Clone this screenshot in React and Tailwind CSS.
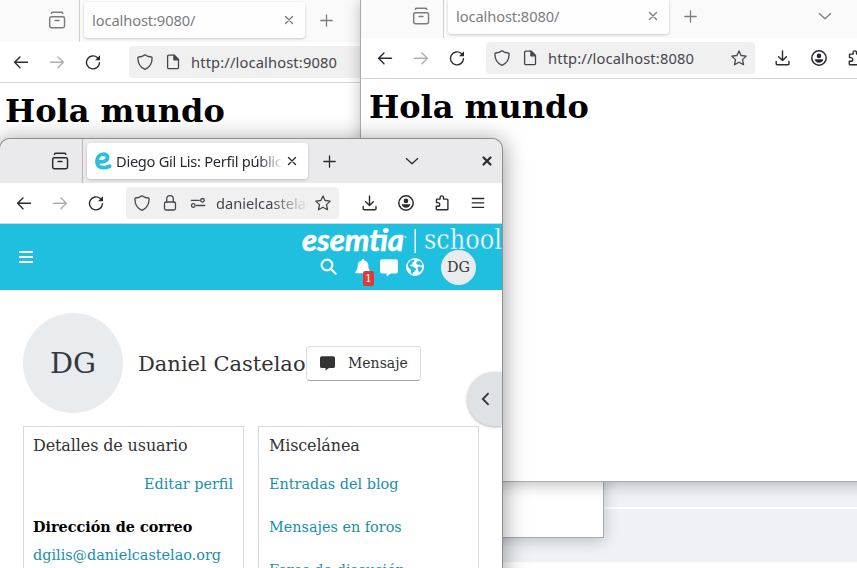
import React from "react";

const UI = "font-['Noto_Sans','Open_Sans',sans-serif]";
const SERIF = "font-['DejaVu_Serif',serif]";

function Icon({ children, className = "", size = 16 }) {
  return (
    <svg
      width={size}
      height={size}
      viewBox="0 0 16 16"
      fill="none"
      stroke="currentColor"
      strokeWidth="1.3"
      strokeLinecap="round"
      strokeLinejoin="round"
      className={"shrink-0 " + className}
    >
      {children}
    </svg>
  );
}

const Back = () => (
  <Icon><path d="M14.5 8.3H1.8M7 2.9 1.6 8.3 7 13.7" strokeWidth="1.4" /></Icon>
);
const Forward = () => (
  <Icon className="text-[#aeaeb0]"><path d="M1.5 8.3h12.7M9 2.9l5.4 5.4L9 13.7" strokeWidth="1.4" /></Icon>
);
const Reload = () => (
  <Icon>
    <path d="M14.5 8.6A6.5 6.5 0 1 1 12.3 3.5" strokeWidth="1.4" />
    <path d="M15 1.3v5h-5z" fill="currentColor" stroke="none" />
  </Icon>
);
const Shield = () => (
  <Icon><path d="M8 .8C6.2 2.2 3.7 2.9 1.5 3 1 3.2.9 3.500.9 4c0 5.200 2.500 9.400 7.100 11.300C12.600 13.400 15.100 9.200 15.100 4c0-.5-.1-.8-.6-1C12.300 2.900 9.800 2.200 8 .8z" /></Icon>
);
const Page = () => (
  <Icon>
    <path d="M2.600 2.500c0-.8.5-1.300 1.300-1.300h5.400l4.200 4.200v8c0 .8-.5 1.300-1.300 1.300H3.900c-.8 0-1.300-.5-1.300-1.300z" />
    <path d="M8.900 1.300v4.500h4.500z" fill="currentColor" />
  </Icon>
);
const Lock = () => (
  <Icon>
    <rect x="2.500" y="7" width="11" height="8" rx="1.500" />
    <path d="M4.700 7V4a3.300 3.300 0 0 1 6.600 0v3" />
  </Icon>
);
const Sliders = () => (
  <Icon>
    <path d="M1.300 5.300h8M6.500 10.500h8.200" />
    <circle cx="12.500" cy="5.300" r="1.800" />
    <circle cx="3.300" cy="10.500" r="1.800" />
  </Icon>
);
const Star = () => (
  <Icon><path d="m8 .9 2.100 4.600 5.100.6-3.700 3.500 1 5.100L8 12.200l-4.500 2.500 1-5.100L.8 6.100l5.100-.6z" /></Icon>
);
const Download = () => (
  <Icon><path d="M7.500 1v9.400M3.700 6.800l3.800 3.700 3.800-3.700M1.200 11.500v2.200c0 .6.4 1 1 1h10.800c.6 0 1-.4 1-1v-2.200" strokeWidth="1.400" /></Icon>
);
const Account = () => (
  <Icon>
    <circle cx="8" cy="8" r="7.200" strokeWidth="1.500" />
    <circle cx="8" cy="5.900" r="2.300" fill="currentColor" stroke="none" />
    <path d="M3.800 9.300h8.400c0 2-1.900 3.400-4.200 3.400S3.800 11.300 3.800 9.300z" fill="currentColor" stroke="none" />
  </Icon>
);
const Puzzle = () => (
  <Icon><path d="M2.500 7.100V4.700c0-.4.2-.6.600-.6h3V2.600a1.700 1.700 0 0 1 3.400 0v1.500h3.600c.5 0 .8.300.8.800v9c0 .5-.3.800-.8.800H3.100c-.5 0-.8-.3-.8-.8v-2.600h1.600a1.700 1.700 0 0 0 0-3.700H2.500z" strokeWidth="1.400" /></Icon>
);
const Menu = () => (
  <Icon><path d="M2.300 3.500h11.400M2.300 7.900h11.400M2.300 12.300h11.400" /></Icon>
);
const TabsBox = () => (
  <Icon size={18}>
    <rect x="1.500" y="5.100" width="13.200" height="9.700" rx="1.500" />
    <path d="M3 2.100c.3-.7.700-.9 1.300-.9h7.600c.6 0 1 .2 1.300.9M6.300 8.500h3.500" />
  </Icon>
);
const Chevron = () => (
  <Icon><path d="m2.300 5.600 5.700 5.200 5.700-5.200" /></Icon>
);
const Plus = () => (
  <Icon><path d="M8.500 2.800v11.400M2.800 8.500h11.400" /></Icon>
);
const Cross = ({ bold }) => (
  <Icon><path d="m4.500 4.500 7 7m0-7-7 7" strokeWidth={bold ? 2.200 : 1.400} /></Icon>
);
const Bubble = ({ size, className }) => (
  <svg width={size} height={size} viewBox="0 0 18 18" className={className} fill="currentColor">
    <path d="M2.200 .2h13.600A2.200 2.200 0 0 1 18 2.400v9.800a2.200 2.200 0 0 1-2.200 2.200h-5L6.600 17.400v-3H2.200A2.200 2.200 0 0 1 0 12.200V2.400A2.200 2.200 0 0 1 2.200.2z" />
  </svg>
);

function Tab({ title, favicon }) {
  return (
    <div className="flex h-9 w-[221px] shrink-0 items-center rounded-[4px] bg-white/80 pr-2 shadow-[0_1px_3px_rgba(0,0,0,0.2)]">
      {favicon}
      <div className={"flex-1 overflow-hidden whitespace-nowrap text-[14.67px] leading-5 " + (favicon ? "pl-1 tracking-[-0.3px] [mask-image:linear-gradient(to_right,black_85%,transparent)]" : "pl-2 tracking-[-0.1px]")}>
        {title}
      </div>
      <Cross />
    </div>
  );
}

function NavButtons() {
  return (
    <div className="flex w-[88px] shrink-0 items-center gap-5">
      <Back />
      <Forward />
      <Reload />
    </div>
  );
}

function SmallFavicon() {
  return (
    <svg width="18" height="18" viewBox="0 0 18 18" fill="none" className="ml-[7px] shrink-0" stroke="#29bfdf" strokeWidth="3.800" strokeLinecap="round">
      <path d="M4.600 9.600C8.600 10.700 13.600 9 13.600 5.600 13.600 3.200 11.600 2.200 9.400 2.200 5.400 2.200 2.900 5.600 2.900 9.600c0 4 2.700 6.100 6.400 6.100 2.400 0 4.100-.4 6.200-1.500" />
    </svg>
  );
}

function PlainBrowser({ port, frame, tabBar, stub, tabRow, urlBar, nav, children, heading }) {
  return (
    <section className={"absolute overflow-hidden bg-white text-[#2b2a33] " + frame}>
      <div className={"flex bg-[#fafafa] text-[#7c7c7f] " + tabBar}>
        <div className={"flex shrink-0 justify-end border-r border-[#cfcfcf] " + stub}>
          <TabsBox />
        </div>
        <div className={"flex h-9 items-center " + tabRow}>
          <div className="ml-1 mr-[13px]"><Tab title={"localhost:" + port + "/"} /></div>
          <Plus />
          {children && <div className="ml-[119px]"><Chevron /></div>}
        </div>
      </div>
      <div className={"flex h-[41px] items-center border-b border-[#d6d6d6] " + nav}>
        <NavButtons />
        <div className={"flex h-8 shrink-0 items-center gap-3 rounded-[4px] bg-[#f0f0f0] pl-2 text-[#46454d] " + urlBar}>
          <Shield />
          <Page />
          <span className="-ml-[2px] flex-1 text-[14.67px] leading-5 tracking-[0.15px]">http://localhost:{port}</span>
          {children && <Star />}
        </div>
        {children}
      </div>
      <h1 className={"text-[32px] font-bold leading-[38px] text-black " + SERIF + " " + heading}>Hola mundo</h1>
    </section>
  );
}

function SiteHeader() {
  return (
    <header className="flex h-[66px] bg-[#1fc0df] text-white">
      <div className="flex w-[301px] shrink-0 items-center pl-[18px]">
        <svg width="16" height="14" viewBox="0 0 16 14" fill="currentColor">
          <path d="M1 1h14v2H1zM1 6h14v2H1zM1 11h14v2H1z" />
        </svg>
      </div>
      <div className="flex w-[201px] flex-col">
        <svg width="201" height="29" viewBox="0 0 201 29" className="block shrink-0" fill="white">
          <text x="1" y="26.500" textLength="102" lengthAdjust="spacingAndGlyphs" className="font-['Lato',sans-serif] text-[30px] font-bold italic" stroke="white" strokeWidth=".6" strokeLinejoin="round">esemtia</text>
          <circle cx="104.500" cy="13" r="1.300" opacity=".5" />
          <path d="M113.500 5h1.500v24h-1.500z" />
          <text x="123" y="25" textLength="78" lengthAdjust="spacingAndGlyphs" className="font-['DejaVu_Serif',serif] text-[27px]" stroke="#1fc0df" strokeWidth=".4">school</text>
        </svg>
        <div className="-mt-[3px] flex h-[35px] items-center">
          <svg width="17" height="17" viewBox="0 0 17 17" fill="none" stroke="white" strokeWidth="2.100" strokeLinecap="round" className="mb-[3px] ml-[19px]">
            <circle cx="7" cy="7" r="5.400" />
            <path d="m11 11 4.700 4.700" />
          </svg>
          <div className="relative ml-[18px]">
            <svg width="16" height="18" viewBox="0 0 16 18" fill="white" className="block">
              <path d="M8 0c.7 0 1.100.5 1.100 1.200C11.800 1.700 13.300 4 13.300 6.500c0 3 .8 4.600 2.200 6.100.7.800.3 1.700-.7 1.700H1.200c-1 0-1.400-.9-.7-1.700 1.400-1.500 2.200-3.100 2.200-6.100 0-2.500 1.500-4.800 4.200-5.300C6.900.5 7.300 0 8 0z" />
            </svg>
            <span className={"absolute left-[8px] top-[12px] flex h-[15px] w-[11px] items-center justify-center rounded-[2px] bg-[#e33737] text-[11px] leading-none " + SERIF}>1</span>
          </div>
          <Bubble size={18} className="ml-[9px]" />
          <svg width="18" height="18" viewBox="0 0 18 18" className="mb-px ml-2">
            <circle cx="9" cy="9" r="9" fill="white" />
            <path d="M2.400 4.700 5 2.300 8 1.800l.3 1.600-1.600.9-.7 2-1.900.7.700 1.300 2.300.2 1.900 1.600 1.300.6-1.400 2.500-1.700 1.300-1.100 2.400-1-2.700-.2-2.500-1.900-1.500-1.300-2.400z M11 3.400l2.600-.7 2.200 2.300.7 2.300-1.800.2-1.500-1-1.800.3-1.200-1.600z M11.500 9l2.200-.4 2.500.9-.8 2.700-2.200 2.400-1.300-2.900z" fill="#1fc0df" />
          </svg>
          <div className={"ml-[17px] flex h-[35px] w-[35px] items-center justify-center rounded-full bg-[#e9ecef] text-[14.400px] text-[#343a40] " + SERIF}>DG</div>
        </div>
      </div>
    </header>
  );
}

function Profile() {
  return (
    <main className={"relative h-[278px] overflow-hidden bg-white px-[23px] pt-[23px] text-[#333] " + SERIF}>
      <div className="flex h-[100px] items-center">
        <div className="flex h-[100px] w-[100px] shrink-0 items-center justify-center rounded-full bg-[#e9ecef] pt-[2px] text-[28.800px] text-[#343a40]">DG</div>
        <h2 className="ml-[15px] w-[168px] shrink-0 whitespace-nowrap pt-[2px] text-[21px] leading-7">Daniel Castelao</h2>
        <button className="flex h-[35px] w-[115px] shrink-0 items-center rounded-[4px] border border-[#dedede] border-b-[#aaa] pl-[13px] text-[14px]">
          <Bubble size={15} />
          <span className="ml-[13px]">Mensaje</span>
        </button>
      </div>
      <div className="mt-[13px] flex gap-[14px]">
        <article className="flex h-[170px] w-[221px] flex-col border border-[#d9d9d9] px-[9px] pt-[7px]">
          <h3 className="text-[16px] leading-6 tracking-[-0.12px]">Detalles de usuario</h3>
          <a className="mr-px mt-[16px] self-end text-[14.400px] leading-[21px] text-[#188fa7]">Editar perfil</a>
          <b className="mt-[21px] text-[14.400px] leading-[21px] text-black">Dirección de correo</b>
          <a className="mt-[8px] text-[14.400px] leading-[21px] text-[#188fa7]">dgilis@danielcastelao.org</a>
        </article>
        <article className="flex h-[170px] w-[221px] flex-col border border-[#d9d9d9] px-[10px] pt-[7px]">
          <h3 className="text-[16px] leading-6 tracking-[-0.15px]">Miscelánea</h3>
          <a className="mt-[16px] text-[14.400px] leading-[21px] text-[#188fa7]">Entradas del blog</a>
          <a className="mt-[22px] text-[14.400px] leading-[21px] text-[#188fa7]">Mensajes en foros</a>
          <a className="mt-[22px] text-[14.400px] leading-[21px] text-[#188fa7]">Foros de discusión</a>
        </article>
      </div>
      <button className="absolute right-0 top-[82px] flex h-[54px] w-[35px] items-center rounded-l-full bg-[#dee2e6] pl-[11px] shadow-[0_1px_3px_rgba(0,0,0,0.3)]">
        <Icon><path d="M10.600 2.200 4.800 8l5.800 5.800" strokeWidth="1.800" strokeLinecap="butt" strokeLinejoin="miter" /></Icon>
      </button>
    </main>
  );
}

function FrontBrowser() {
  return (
    <section className="absolute left-0 top-[139px] h-[429px] w-[502px] overflow-hidden rounded-t-[10px] text-[#2b2a33]">
      <div className="flex h-[44px] items-center bg-[#eaeaec]">
        <div className="flex h-full w-[83px] shrink-0 items-center justify-end border-r border-[#b8b8ba] pr-[13px]">
          <TabsBox />
        </div>
        <div className="ml-1 mr-[13px] rounded-[4px] bg-white"><Tab title="Diego Gil Lis: Perfil público" favicon={<SmallFavicon />} /></div>
        <Plus />
        <div className="ml-[67px]"><Chevron /></div>
        <div className="ml-[59px]"><Cross bold /></div>
      </div>
      <div className="flex h-[41px] items-center border-b border-[#d6d6d6] bg-white pl-4">
        <NavButtons />
        <div className="ml-[22px] flex h-8 w-[213px] shrink-0 items-center gap-3 rounded-[4px] bg-[#f0f0f0] pl-2 pr-2 text-[#46454d]">
          <Shield />
          <Lock />
          <Sliders />
          <span className="-ml-[2px] mr-[-5px] flex-1 overflow-hidden whitespace-nowrap text-[14.67px] leading-5 [mask-image:linear-gradient(to_right,black_60%,transparent)]">danielcastelao.org</span>
          <Star />
        </div>
        <div className="ml-[23px] flex gap-5">
          <Download />
          <Account />
          <Puzzle />
          <Menu />
        </div>
      </div>
      <SiteHeader />
      <Profile />
    </section>
  );
}

export default function App() {
  return (
    <div className={"relative h-[568px] w-[857px] overflow-hidden bg-white " + UI}>
      <div className="h-[507px] bg-[#eef2f7]" />
      <div className="mt-[2px] h-[53px] bg-[#eef2f7]" />
      <PlainBrowser
        port="9080"
        frame="left-0 top-0 h-[537px] w-[603px] shadow-[0_0_0_1px_#a8abaf,0_3px_14px_1px_rgba(0,0,0,0.22)]"
        tabBar="h-[42px]"
        stub="h-[42px] w-[80px] pr-[13px] pt-[11px]"
        tabRow="mt-[2px]"
        nav="pl-[13px]"
        urlBar="ml-[28px] w-[268px]"
        heading="pl-[5px] pt-[9px]"
      />
      <PlainBrowser
        port="8080"
        frame="left-[361px] top-0 h-[481px] w-[520px] shadow-[0_0_0_1px_#a8abaf,0_3px_14px_1px_rgba(0,0,0,0.25)]"
        tabBar="h-[38px]"
        stub="h-[38px] w-[83px] pr-[13px] pt-[7px]"
        tabRow="-mt-[2px]"
        nav="pl-[16px]"
        urlBar="ml-[21px] w-[269px] pr-2"
        heading="pl-[8px] pt-[9px]"
      >
        <div className="ml-5 flex shrink-0 gap-5">
          <Download />
          <Account />
          <Puzzle />
        </div>
      </PlainBrowser>
      <div className="absolute left-0 top-[139px] h-[440px] w-[502px] rounded-t-[10px] shadow-[0_0_0_1px_#8e8e8e,0_3px_22px_3px_rgba(0,0,0,0.36)]" />
      <FrontBrowser />
    </div>
  );
}
